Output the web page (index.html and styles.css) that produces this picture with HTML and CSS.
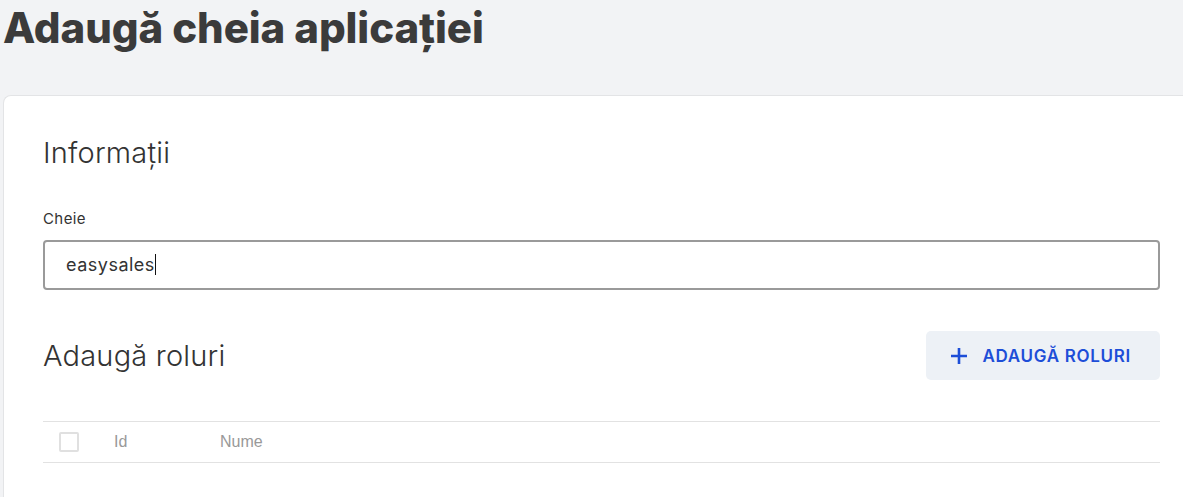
FILE: index.html
```html
<!DOCTYPE html>
<html lang="ro">
<head>
    <meta charset="UTF-8">
    <meta name="viewport" content="width=device-width, initial-scale=1.0">
    <title>Adaugă cheia aplicației</title>
    <link rel="stylesheet" href="styles.css">
</head>
<body>
    <div class="page">
        <h1 class="page-title">Adaugă cheia aplicației</h1>

        <div class="card">
            <h2 class="section-title">Informații</h2>

            <div class="field">
                <label class="field-label" for="appKey">Cheie</label>
                <div class="field-input">easysales<span class="caret"></span></div>
            </div>

            <div class="section-head">
                <h2 class="section-title">Adaugă roluri</h2>
                <button class="btn-add">
                    <svg width="18" height="18" viewBox="0 0 18 18">
                        <path d="M9 1v16M1 9h16" stroke="currentColor" stroke-width="2.6" fill="none"/>
                    </svg>
                    ADAUGĂ ROLURI
                </button>
            </div>

            <div class="table-head">
                <div class="col-check"><span class="checkbox"></span></div>
                <div class="col-id">Id</div>
                <div class="col-name">Nume</div>
            </div>
        </div>
    </div>
</body>
</html>
```

FILE: styles.css
```css
html, body {
    margin: 0;
    padding: 0;
    background-color: #f2f3f5;
    overflow: hidden;
}
.page {
    padding-left: 3px;
    font-family: Inter, "Noto Sans", sans-serif;
    color: #3a3a3a;
}
.page-title {
    margin: 0;
    height: 95px;
    padding-top: 3px;
    box-sizing: border-box;
    font-size: 42px;
    font-weight: 800;
    letter-spacing: -0.1px;
    color: #3b3b3b;
    line-height: 50px;
}
.card {
    width: 1197px;
    box-sizing: border-box;
    background: white;
    border: 1px solid #e3e4e6;
    border-right: none;
    border-radius: 8px 0 0 0;
    padding: 37px 40px 40px 39px;
    min-height: 420px;
}
.section-title {
    margin: 0;
    font-size: 29px;
    font-weight: 300;
    letter-spacing: 0.2px;
    color: #333;
    line-height: 40px;
}
.field {
    margin-top: 37px;
}
.field-label {
    display: block;
    font-size: 15px;
    letter-spacing: 0.4px;
    color: #333;
    line-height: 18px;
    margin-bottom: 12px;
}
.field-input {
    height: 50px;
    box-sizing: border-box;
    border: 2px solid #9a9a9a;
    border-radius: 4px;
    padding: 0 21px;
    font-size: 18px;
    letter-spacing: 0.5px;
    line-height: 46px;
    color: #333;
}
.caret {
    display: inline-block;
    width: 1px;
    height: 21px;
    background: #111;
    vertical-align: -4px;
}
.section-head {
    display: flex;
    justify-content: space-between;
    align-items: center;
    margin-top: 41px;
}
.btn-add {
    display: flex;
    align-items: center;
    gap: 14px;
    height: 49px;
    padding: 0 29px 0 24px;
    border: none;
    border-radius: 5px;
    background-color: #edf1f6;
    color: #1d4ed8;
    font-family: Inter, sans-serif;
    font-size: 17px;
    font-weight: 600;
    letter-spacing: 0.7px;
    cursor: pointer;
}
.table-head {
    display: flex;
    align-items: center;
    height: 40px;
    margin-top: 41px;
    border-top: 1px solid #e2e2e2;
    border-bottom: 1px solid #e2e2e2;
    font-family: "Liberation Sans", Arial, sans-serif;
    font-size: 16px;
    color: #999;
}
.col-check {
    width: 71px;
    padding-left: 16px;
    box-sizing: border-box;
    display: flex;
}
.checkbox {
    width: 16px;
    height: 16px;
    border: 2px solid #e0e0e0;
    border-radius: 2px;
}
.col-id {
    width: 106px;
}
```
